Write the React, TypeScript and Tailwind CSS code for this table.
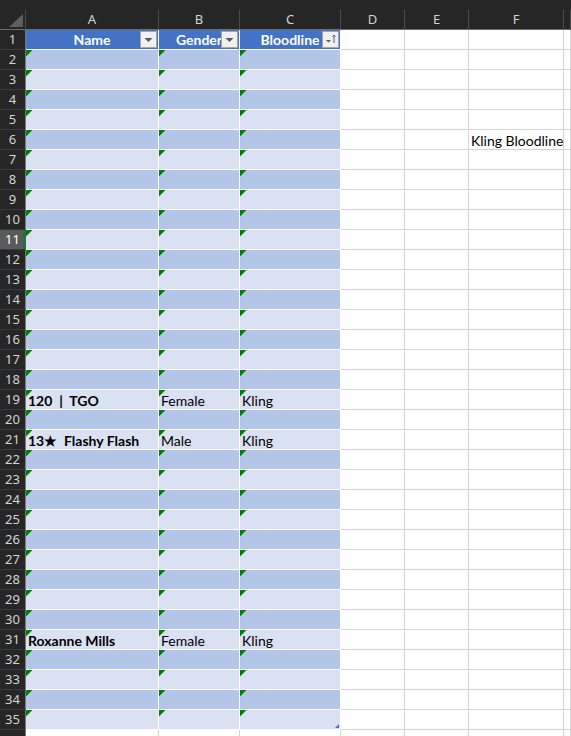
import React from "react";

const COL_LETTERS = ["A", "B", "C", "D", "E", "F", ""];

const DATA: Record<number, [string, string, string]> = {
  19: ["120  |  TGO", "Female", "Kling"],
  21: ["13★  Flashy Flash", "Male", "Kling"],
  31: ["Roxanne Mills", "Female", "Kling"],
};

const cellFont = { fontFamily: "Lato, 'Liberation Sans', sans-serif" };

function Tri() {
  return (
    <svg className="absolute left-0 top-0" width="7" height="7" viewBox="0 0 7 7">
      <polygon points="0,0 6.5,0 0,6.5" fill="#008000" />
    </svg>
  );
}

function FilterBtn({ sorted }: { sorted?: boolean }) {
  return (
    <div className="absolute right-[1px] top-[1px] h-[17px] w-[17px] border border-[#a6a6a6] bg-[#f0f0f0]">
      <svg width="15" height="15" viewBox="0 0 15 15" className="block">
        {sorted ? (
          <>
            <polygon points="3,8 8,8 5.5,10.5" fill="#595959" />
            <line x1="11" y1="3" x2="11" y2="11" stroke="#595959" strokeWidth="1" />
            <polyline points="9.5,4.5 11,3 12.5,4.5" fill="none" stroke="#595959" strokeWidth="1" />
          </>
        ) : (
          <polygon points="3.5,6 11.5,6 7.5,10" fill="#595959" />
        )}
      </svg>
    </div>
  );
}

export default function App() {
  const rows = Array.from({ length: 36 }, (_, i) => i + 1);
  return (
    <div className="h-[736px] w-[571px] overflow-hidden bg-white" style={cellFont}>
      <div className="h-[10px] bg-[#262626]" />
      <div className="grid grid-cols-[26px_133px_81px_101px_64px_64px_95px_1fr]">
        {/* column header row */}
        <div className="relative h-[20px] border-b border-r border-[#6e6e6e] border-r-[#4a4a4a] bg-[#262626]">
          <svg className="absolute left-[9px] top-[4px]" width="14" height="13" viewBox="0 0 14 13">
            <polygon points="14,0 14,13 0,13" fill="#5f5f5f" />
          </svg>
        </div>
        {COL_LETTERS.map((c, i) => (
          <div
            key={i}
            className="flex h-[20px] items-center justify-center border-b border-r border-b-[#6e6e6e] border-r-[#4a4a4a] bg-[#262626] text-[13px] text-[#d4d4d4]"
            style={{ fontFamily: "'Noto Sans', 'Liberation Sans', sans-serif" }}
          >
            {c}
          </div>
        ))}

        {rows.map((r) => {
          const active = r === 11;
          const band = r % 2 === 0 ? "bg-[#b4c6e7]" : "bg-[#d9e1f2]";
          const inTable = r <= 35;
          const data = DATA[r];
          return (
            <React.Fragment key={r}>
              <div
                className={
                  "relative flex h-[20px] items-center justify-center border-b border-r text-[13px] " +
                  (active
                    ? "border-b-[#3a3a3a] border-r-[#217346] bg-[#5a5a5a] text-white"
                    : "border-b-[#3a3a3a] border-r-[#7a7a7a] bg-[#262626] text-[#d4d4d4]")
                }
                style={{ fontFamily: "'Noto Sans', 'Liberation Sans', sans-serif" }}
              >
                {active && <div className="absolute right-0 top-0 h-full w-[2px] bg-[#217346]" />}
                {r <= 35 ? r : ""}
              </div>
              {[0, 1, 2].map((ci) => {
                if (r === 1) {
                  const label = ["Name", "Gender", "Bloodline"][ci];
                  return (
                    <div
                      key={ci}
                      className="relative flex h-[20px] items-center justify-center overflow-hidden border-b border-r border-white bg-[#4472c4] text-[14px] font-bold text-white"
                    >
                      <span className="whitespace-pre">{label}</span>
                      <FilterBtn sorted={ci === 2} />
                    </div>
                  );
                }
                if (!inTable) {
                  return (
                    <div key={ci} className="h-[20px] border-b border-r border-[#d4d4d4] bg-white" />
                  );
                }
                return (
                  <div
                    key={ci}
                    className={
                      "relative h-[20px] overflow-visible whitespace-pre border-b border-r border-white pl-[2px] text-[14px] leading-[21px] text-black " +
                      band +
                      (ci === 0 ? " font-bold" : "")
                    }
                  >
                    <Tri />
                    {data ? data[ci] : ""}
                    {r === 35 && ci === 2 && (
                      <svg className="absolute bottom-[1px] right-[1px]" width="4" height="4" viewBox="0 0 4 4">
                        <polygon points="4,0 4,4 0,4" fill="#4472c4" />
                      </svg>
                    )}
                  </div>
                );
              })}
              {[3, 4, 5, 6].map((ci) => (
                <div
                  key={ci}
                  className="h-[20px] whitespace-pre border-b border-r border-[#d4d4d4] bg-white pl-[2px] text-[14px] leading-[21px] text-black"
                >
                  {r === 6 && ci === 5 ? "Kling Bloodline" : ""}
                </div>
              ))}
            </React.Fragment>
          );
        })}
      </div>
    </div>
  );
}
